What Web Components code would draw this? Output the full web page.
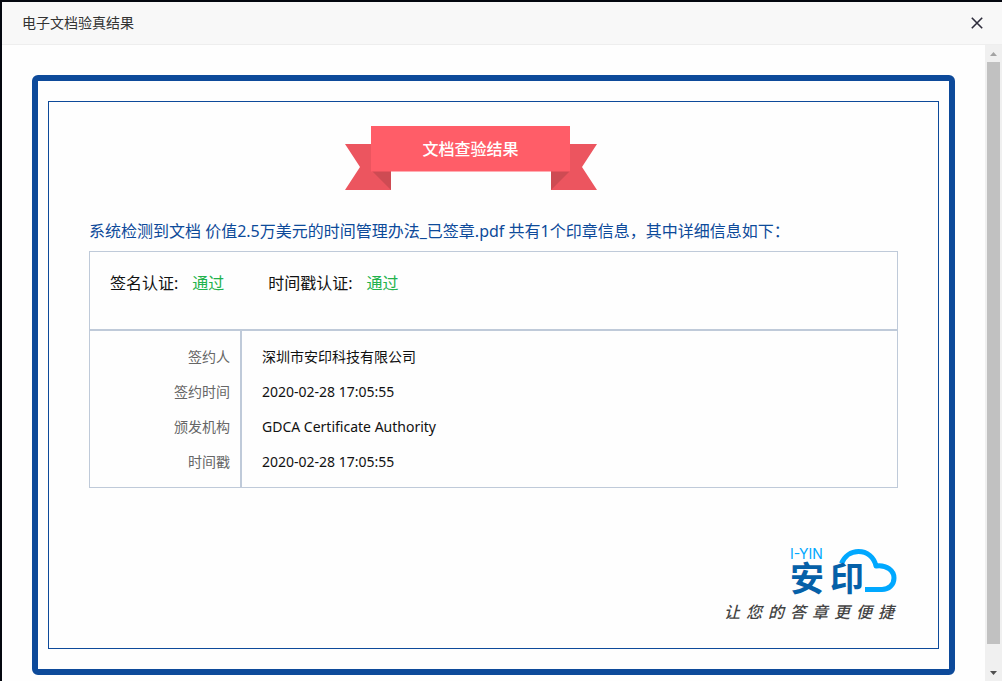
<!DOCTYPE html>
<html lang="zh-CN">
<head>
<meta charset="utf-8">
<meta name="viewport" content="width=device-width, initial-scale=1">
<title>电子文档验真结果</title>
<style>
  html, body { margin: 0; height: 100%; }
  body {
    background: #04070f;
    color: #111;
    font: 14px/20px "Noto Sans", "Noto Sans CJK SC", sans-serif;
  }
</style>
</head>
<body>
<verify-dialog heading="电子文档验真结果">
  <result-frame>
    <title-ribbon>文档查验结果</title-ribbon>
    <seal-report>
      <span slot="summary">系统检测到文档 价值2.5万美元的时间管理办法_已签章.pdf 共有1个印章信息，其中详细信息如下：</span>
      <check-status slot="status" label="签名认证:">通过</check-status>
      <check-status slot="status" label="时间戳认证:">通过</check-status>
    </seal-report>
    <brand-mark></brand-mark>
  </result-frame>
</verify-dialog>

<script>
class BaseElement extends HTMLElement {
  constructor() {
    super();
    this.attachShadow({ mode: "open" }).innerHTML = this.render();
  }
}

customElements.define("verify-dialog", class extends BaseElement {
  render() {
    return `<style>
      :host { display: flex; flex-direction: column; box-sizing: border-box; height: 100vh; padding: 2px 0 0 2px; }
      header { display: flex; align-items: center; justify-content: space-between; height: 42px; padding: 0 18px 0 20px; background: #f8f8f8; border-bottom: 1px solid #eee; flex: none; }
      h1 { margin: 0; font-size: 14px; font-weight: 400; line-height: 20px; color: #333; }
      button { display: flex; border: 0; padding: 0; background: none; color: #2e2d3c; cursor: pointer; }
      .body { display: flex; flex: 1; min-height: 0; background: #fefefe; }
      main { flex: 1; min-width: 0; padding: 30px; overflow-y: auto; scrollbar-width: none; }
    </style>
    <header><h1>${this.getAttribute("heading")}</h1>
      <button type="button" aria-label="关闭"><svg width="14" height="14" viewBox="0 0 14 14" fill="none" stroke="currentColor" stroke-width="1.6"><path d="M1.8 1.8 12.2 12.2M12.2 1.8 1.8 12.2"/></svg></button>
    </header>
    <div class="body"><main><slot></slot></main><scroll-rail></scroll-rail></div>`;
  }
});

customElements.define("scroll-rail", class extends BaseElement {
  render() {
    return `<style>
      :host { display: flex; flex-direction: column; width: 17px; background: #f0f0f0; }
      svg { flex: none; }
      .track { flex: 1; padding: 0 2px 20px; display: flex; }
      .thumb { flex: 1; background: #c1c1c1; }
    </style>
    <svg width="17" height="17" viewBox="0 0 17 17"><path fill="#a3a3a3" d="M5 11 8.500 7 12 11Z"/></svg>
    <div class="track"><div class="thumb"></div></div>
    <svg width="17" height="17" viewBox="0 0 17 17"><path fill="#505050" d="M5 7 8.500 11 12 7Z"/></svg>`;
  }
});

customElements.define("result-frame", class extends BaseElement {
  render() {
    return `<style>
      :host { display: block; border: 6px solid #0d4a9a; border-radius: 6px; padding: 20px 10px; }
      section { border: 1px solid #0d4a9a; padding: 24px 40px; }
    </style><section><slot></slot></section>`;
  }
});

customElements.define("title-ribbon", class extends BaseElement {
  render() {
    return `<style>
      :host { display: flex; justify-content: center; padding-right: 46px; }
      .ribbon { display: grid; width: 252px; height: 64px; }
      svg, h2 { grid-area: 1 / 1; }
      h2 { margin: 0; height: 46px; line-height: 46px; text-align: center; font-size: 16px; font-weight: 500; color: #fff; z-index: 1; }
    </style>
    <div class="ribbon">
      <svg width="252" height="64" viewBox="0 0 252 64" aria-hidden="true">
        <path fill="#ec555f" d="M0 18H46V64H0L15 41ZM252 18H206V64H252L237 41Z"/>
        <path fill="#ce4b53" d="M27 45H46V64ZM225 45H206V64Z"/>
        <path fill="#ff5d68" d="M26 0H225V45.500H26Z"/>
      </svg>
      <h2><slot></slot></h2>
    </div>`;
  }
});

customElements.define("check-status", class extends BaseElement {
  render() {
    return `<style>
      :host { display: flex; gap: 14px; font-size: 16px; line-height: 22px; }
      b { font-weight: 400; color: #22b24c; }
    </style><span>${this.getAttribute("label")}</span><b><slot></slot></b>`;
  }
});

customElements.define("seal-report", class extends BaseElement {
  render() {
    const rows = [
      ["签约人", "深圳市安印科技有限公司"],
      ["签约时间", "2020-02-28 17:05:55"],
      ["颁发机构", "GDCA Certificate Authority"],
      ["时间戳", "2020-02-28 17:05:55"],
    ];
    return `<style>
      :host { display: block; padding-top: 28px; }
      p { margin: 0 0 6px; font-size: 16px; line-height: 27px; color: #0d4a9a; }
      .status { display: flex; gap: 44px; box-sizing: border-box; height: 79px; padding: 20px; border: 1px solid #bfcad9; }
      table { width: 100%; table-layout: fixed; border: 1px solid #bfcad9; border-spacing: 0; }
      th, td { height: 35px; padding: 0; font-weight: 400; }
      th { width: 140px; padding-right: 10px; text-align: right; color: #666; border-right: 2px solid #bfcad9; }
      td { padding-left: 20px; text-align: left; color: #111; }
      tr:first-child > * { padding-top: 8px; }
      tr:last-child > * { padding-bottom: 8px; }
    </style>
    <p><slot name="summary"></slot></p>
    <div class="status"><slot name="status"></slot></div>
    <table><tbody>${rows.map(([k, v]) => `<tr><th scope="row">${k}</th><td>${v}</td></tr>`).join("")}</tbody></table>`;
  }
});

customElements.define("brand-mark", class extends BaseElement {
  render() {
    return `<style>
      :host { display: flex; flex-direction: column; align-items: flex-end; padding-top: 60px; }
      svg { overflow: visible; }
      .slogan { display: flex; gap: 6px; margin: 6px 4px 0 0; font-size: 16px; line-height: 24px; font-style: italic; font-weight: 500; color: #444; }
    </style>
    <svg width="108" height="46" viewBox="0 0 108 46" role="img" aria-label="I-YIN 安印">
      <path fill="none" stroke="#00a8ff" stroke-width="5" stroke-linejoin="round" d="M51.500 15.500C54.500 8 61 3.500 68.500 3.500C77 3.500 84 9 86 18C97 16.500 104 23 104 30C104 37 98.500 41.500 92 41.500H75"/>
      <text x="0" y="11" font-family="Inter, sans-serif" font-size="14" fill="#00a8ff">I-YIN</text>
      <text x="0 40" y="43" font-family="'Noto Sans CJK SC', sans-serif" font-size="34" font-weight="700" fill="#0560a8">安印</text>
    </svg>
    <div class="slogan">${[..."让您的答章更便捷"].map(c => `<span>${c}</span>`).join("")}</div>`;
  }
});
</script>
</body>
</html>
